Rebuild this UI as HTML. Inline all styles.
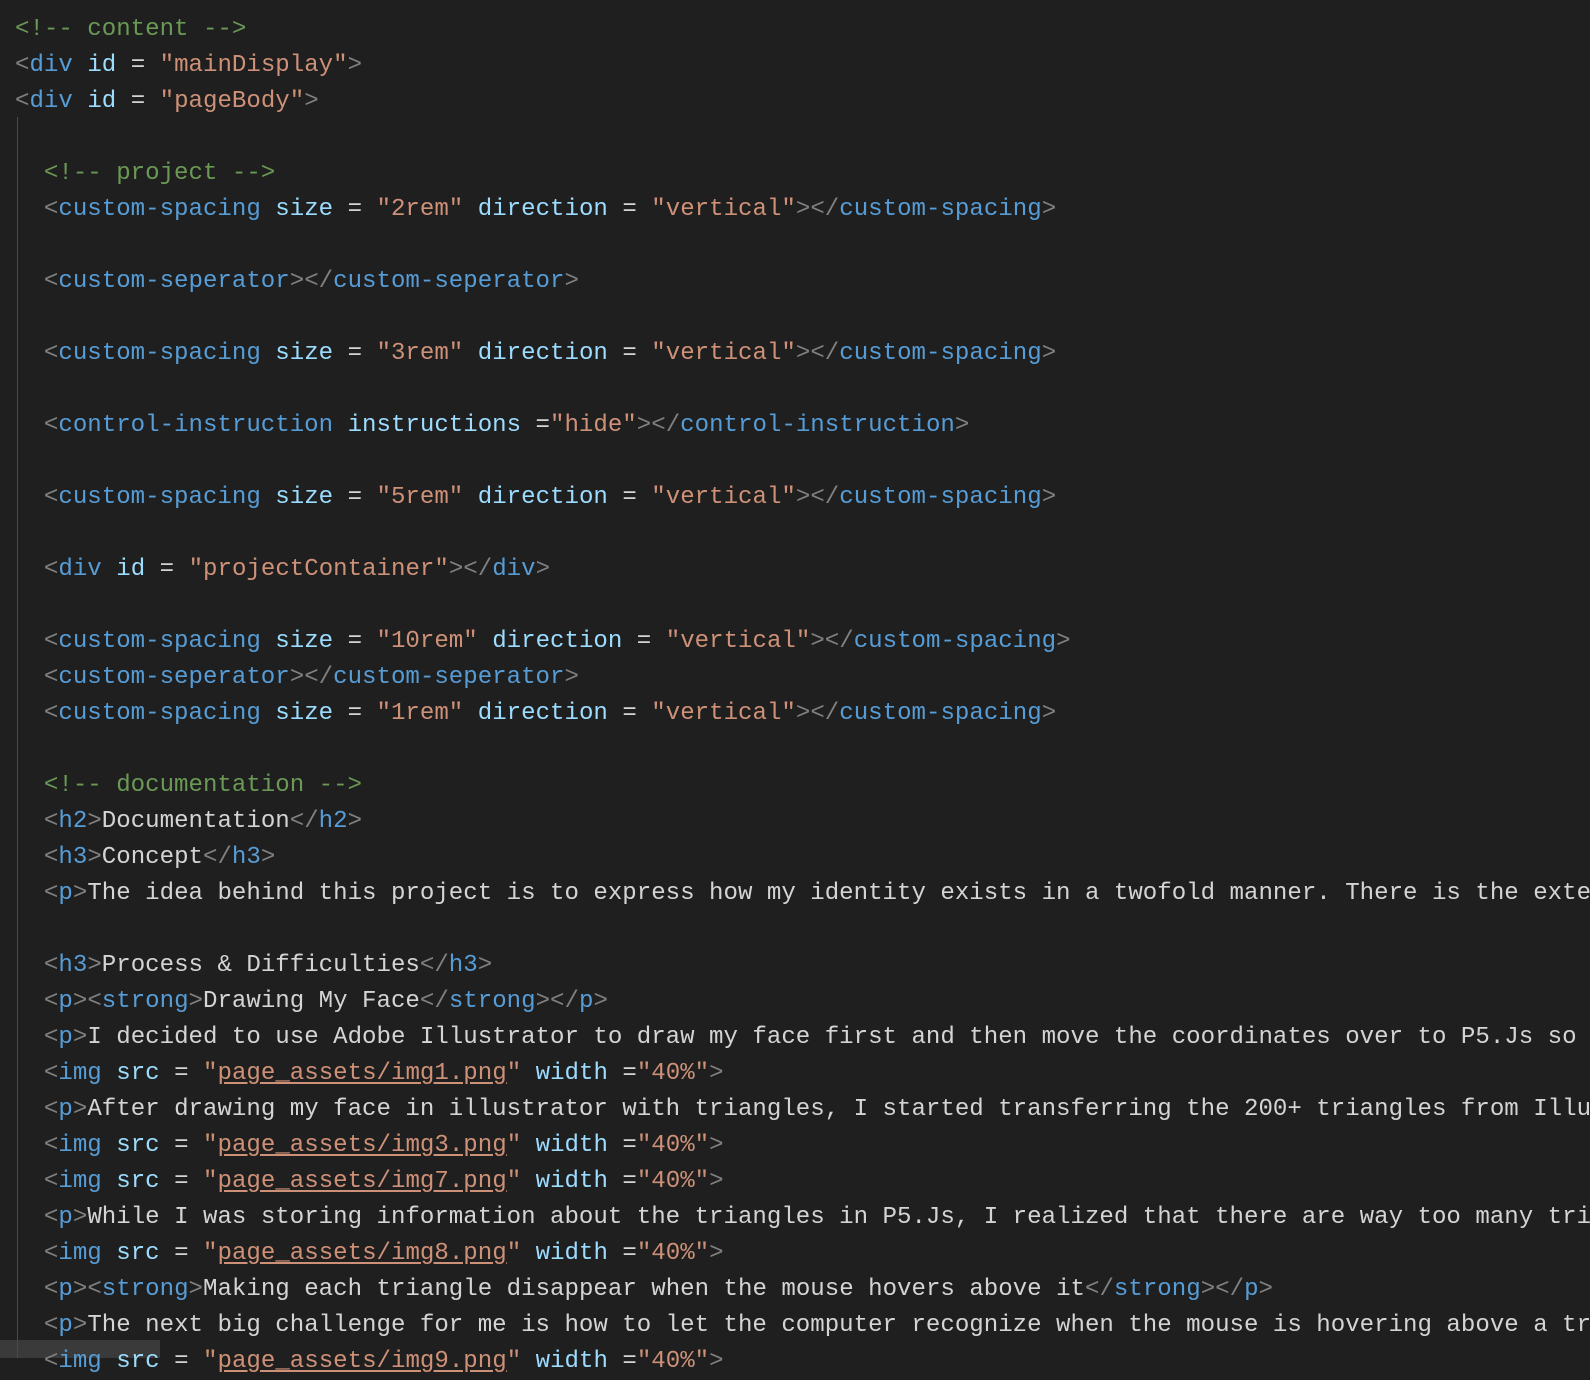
<!DOCTYPE html>
<html><head><meta charset="utf-8"><style>
html,body{margin:0;padding:0;background:#1f1f1f;width:1590px;height:1358px;overflow:hidden}
#ed{position:absolute;left:15px;top:12px;width:1575px;overflow:hidden;font-family:"Liberation Mono",monospace;font-size:24.1px;color:#d4d4d4}
#ed div{height:36px;line-height:36px;white-space:pre;overflow:hidden}
.g{color:#808080}.t{color:#569cd6}.a{color:#9cdcfe}.s{color:#ce9178}.c{color:#6a9955}.u{text-decoration:underline;text-underline-offset:3px}
#guide{position:absolute;left:17px;top:117px;width:1px;height:1241px;background:#4a4a4a}
#hl{position:absolute;left:0;top:1340px;width:160px;height:18px;background:#3a3a3a}
</style></head><body>
<div id="hl"></div>
<div id="guide"></div>
<div id="ed">
<div><span class="c">&lt;!-- content --&gt;</span></div>
<div><span class="g">&lt;</span><span class="t">div</span> <span class="a">id</span> = <span class="s">"mainDisplay"</span><span class="g">&gt;</span></div>
<div><span class="g">&lt;</span><span class="t">div</span> <span class="a">id</span> = <span class="s">"pageBody"</span><span class="g">&gt;</span></div>
<div> </div>
<div>  <span class="c">&lt;!-- project --&gt;</span></div>
<div>  <span class="g">&lt;</span><span class="t">custom-spacing</span> <span class="a">size</span> = <span class="s">"2rem"</span> <span class="a">direction</span> = <span class="s">"vertical"</span><span class="g">&gt;&lt;/</span><span class="t">custom-spacing</span><span class="g">&gt;</span></div>
<div> </div>
<div>  <span class="g">&lt;</span><span class="t">custom-seperator</span><span class="g">&gt;&lt;/</span><span class="t">custom-seperator</span><span class="g">&gt;</span></div>
<div> </div>
<div>  <span class="g">&lt;</span><span class="t">custom-spacing</span> <span class="a">size</span> = <span class="s">"3rem"</span> <span class="a">direction</span> = <span class="s">"vertical"</span><span class="g">&gt;&lt;/</span><span class="t">custom-spacing</span><span class="g">&gt;</span></div>
<div> </div>
<div>  <span class="g">&lt;</span><span class="t">control-instruction</span> <span class="a">instructions</span> =<span class="s">"hide"</span><span class="g">&gt;&lt;/</span><span class="t">control-instruction</span><span class="g">&gt;</span></div>
<div> </div>
<div>  <span class="g">&lt;</span><span class="t">custom-spacing</span> <span class="a">size</span> = <span class="s">"5rem"</span> <span class="a">direction</span> = <span class="s">"vertical"</span><span class="g">&gt;&lt;/</span><span class="t">custom-spacing</span><span class="g">&gt;</span></div>
<div> </div>
<div>  <span class="g">&lt;</span><span class="t">div</span> <span class="a">id</span> = <span class="s">"projectContainer"</span><span class="g">&gt;&lt;/</span><span class="t">div</span><span class="g">&gt;</span></div>
<div> </div>
<div>  <span class="g">&lt;</span><span class="t">custom-spacing</span> <span class="a">size</span> = <span class="s">"10rem"</span> <span class="a">direction</span> = <span class="s">"vertical"</span><span class="g">&gt;&lt;/</span><span class="t">custom-spacing</span><span class="g">&gt;</span></div>
<div>  <span class="g">&lt;</span><span class="t">custom-seperator</span><span class="g">&gt;&lt;/</span><span class="t">custom-seperator</span><span class="g">&gt;</span></div>
<div>  <span class="g">&lt;</span><span class="t">custom-spacing</span> <span class="a">size</span> = <span class="s">"1rem"</span> <span class="a">direction</span> = <span class="s">"vertical"</span><span class="g">&gt;&lt;/</span><span class="t">custom-spacing</span><span class="g">&gt;</span></div>
<div> </div>
<div>  <span class="c">&lt;!-- documentation --&gt;</span></div>
<div>  <span class="g">&lt;</span><span class="t">h2</span><span class="g">&gt;</span>Documentation<span class="g">&lt;/</span><span class="t">h2</span><span class="g">&gt;</span></div>
<div>  <span class="g">&lt;</span><span class="t">h3</span><span class="g">&gt;</span>Concept<span class="g">&lt;/</span><span class="t">h3</span><span class="g">&gt;</span></div>
<div>  <span class="g">&lt;</span><span class="t">p</span><span class="g">&gt;</span>The idea behind this project is to express how my identity exists in a twofold manner. There is the exte</div>
<div> </div>
<div>  <span class="g">&lt;</span><span class="t">h3</span><span class="g">&gt;</span>Process &amp; Difficulties<span class="g">&lt;/</span><span class="t">h3</span><span class="g">&gt;</span></div>
<div>  <span class="g">&lt;</span><span class="t">p</span><span class="g">&gt;&lt;</span><span class="t">strong</span><span class="g">&gt;</span>Drawing My Face<span class="g">&lt;/</span><span class="t">strong</span><span class="g">&gt;&lt;/</span><span class="t">p</span><span class="g">&gt;</span></div>
<div>  <span class="g">&lt;</span><span class="t">p</span><span class="g">&gt;</span>I decided to use Adobe Illustrator to draw my face first and then move the coordinates over to P5.Js so</div>
<div>  <span class="g">&lt;</span><span class="t">img</span> <span class="a">src</span> = <span class="s">"<span class="u">page_assets/img1.png</span>"</span> <span class="a">width</span> =<span class="s">"40%"</span><span class="g">&gt;</span></div>
<div>  <span class="g">&lt;</span><span class="t">p</span><span class="g">&gt;</span>After drawing my face in illustrator with triangles, I started transferring the 200+ triangles from Illu</div>
<div>  <span class="g">&lt;</span><span class="t">img</span> <span class="a">src</span> = <span class="s">"<span class="u">page_assets/img3.png</span>"</span> <span class="a">width</span> =<span class="s">"40%"</span><span class="g">&gt;</span></div>
<div>  <span class="g">&lt;</span><span class="t">img</span> <span class="a">src</span> = <span class="s">"<span class="u">page_assets/img7.png</span>"</span> <span class="a">width</span> =<span class="s">"40%"</span><span class="g">&gt;</span></div>
<div>  <span class="g">&lt;</span><span class="t">p</span><span class="g">&gt;</span>While I was storing information about the triangles in P5.Js, I realized that there are way too many tri</div>
<div>  <span class="g">&lt;</span><span class="t">img</span> <span class="a">src</span> = <span class="s">"<span class="u">page_assets/img8.png</span>"</span> <span class="a">width</span> =<span class="s">"40%"</span><span class="g">&gt;</span></div>
<div>  <span class="g">&lt;</span><span class="t">p</span><span class="g">&gt;&lt;</span><span class="t">strong</span><span class="g">&gt;</span>Making each triangle disappear when the mouse hovers above it<span class="g">&lt;/</span><span class="t">strong</span><span class="g">&gt;&lt;/</span><span class="t">p</span><span class="g">&gt;</span></div>
<div>  <span class="g">&lt;</span><span class="t">p</span><span class="g">&gt;</span>The next big challenge for me is how to let the computer recognize when the mouse is hovering above a tr</div>
<div>  <span class="g">&lt;</span><span class="t">img</span> <span class="a">src</span> = <span class="s">"<span class="u">page_assets/img9.png</span>"</span> <span class="a">width</span> =<span class="s">"40%"</span><span class="g">&gt;</span></div>
</div>
</body></html>
